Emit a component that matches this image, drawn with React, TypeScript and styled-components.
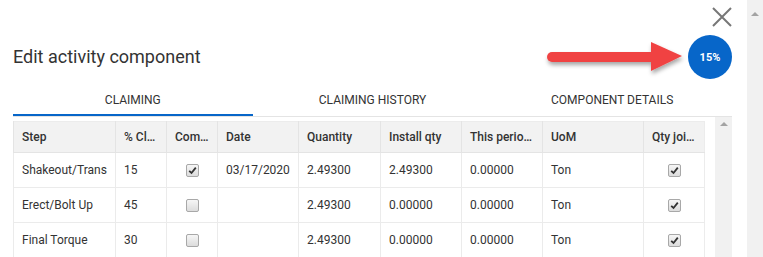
import React, { FC } from 'react'
import styled, { createGlobalStyle } from 'styled-components'

type Row = {
  step: string
  pct: string
  complete: boolean
  date: string
  quantity: string
  installQty: string
  thisPeriod: string
  uom: string
  qtyJoined: boolean
}

const rows: Row[] = [
  { step: 'Shakeout/Trans', pct: '15', complete: true, date: '03/17/2020', quantity: '2.49300', installQty: '2.49300', thisPeriod: '0.00000', uom: 'Ton', qtyJoined: true },
  { step: 'Erect/Bolt Up', pct: '45', complete: false, date: '', quantity: '2.49300', installQty: '0.00000', thisPeriod: '0.00000', uom: 'Ton', qtyJoined: true },
  { step: 'Final Torque', pct: '30', complete: false, date: '', quantity: '2.49300', installQty: '0.00000', thisPeriod: '0.00000', uom: 'Ton', qtyJoined: true },
]

const columns = [
  { label: 'Step', width: 102 },
  { label: '% Cl…', width: 51 },
  { label: 'Com…', width: 51 },
  { label: 'Date', width: 81 },
  { label: 'Quantity', width: 82 },
  { label: 'Install qty', width: 81 },
  { label: 'This perio…', width: 81 },
  { label: 'UoM', width: 101 },
  { label: 'Qty joi…', width: 61 },
]

const tabs = ['Claiming', 'Claiming history', 'Component details']

const CheckBox: FC<{ checked: boolean }> = ({ checked }) => (
  <Box>
    {checked && (
      <svg width='9' height='9' viewBox='0 0 9 9'>
        <path d='M1.2 4.8 L3.5 7 L7.8 1.6' fill='none' stroke='#333' strokeWidth='1.8' />
      </svg>
    )}
  </Box>
)

const App: FC = () => {
  return (
    <>
      <GlobalStyle />
      <Page>
        <Dialog>
          <Header>
            <Title>Edit activity component</Title>
            <HeaderSide>
              <CloseButton aria-label='Close'>
                <svg width='20' height='20' viewBox='0 0 20 20'>
                  <path d='M1 1 L19 19 M19 1 L1 19' stroke='#777' strokeWidth='2' />
                </svg>
              </CloseButton>
              <ProgressBadge>15%</ProgressBadge>
            </HeaderSide>
          </Header>

          <TabBar>
            {tabs.map((t, i) => (
              <Tab key={t} active={i === 0}>{t}</Tab>
            ))}
          </TabBar>

          <Body>
            <TableWrap>
              <Table>
                <colgroup>
                  {columns.map(c => <col key={c.label} style={{ width: c.width }} />)}
                </colgroup>
                <thead>
                  <tr>
                    {columns.map(c => <Th key={c.label}>{c.label}</Th>)}
                  </tr>
                </thead>
                <tbody>
                  {rows.map(r => (
                    <tr key={r.step}>
                      <Td>{r.step}</Td>
                      <Td>{r.pct}</Td>
                      <Td center><CheckBox checked={r.complete} /></Td>
                      <Td>{r.date}</Td>
                      <Td>{r.quantity}</Td>
                      <Td>{r.installQty}</Td>
                      <Td>{r.thisPeriod}</Td>
                      <Td>{r.uom}</Td>
                      <Td center><CheckBox checked={r.qtyJoined} /></Td>
                    </tr>
                  ))}
                </tbody>
              </Table>
            </TableWrap>
            <ScrollTrack inner>
              <ScrollArrow />
            </ScrollTrack>
          </Body>

          <Callout width='142' height='44' viewBox='0 0 142 44'>
            <defs>
              <filter id='shadow' x='-10%' y='-30%' width='120%' height='180%'>
                <feDropShadow dx='1' dy='3' stdDeviation='2' floodColor='#000' floodOpacity='0.35' />
              </filter>
            </defs>
            <g filter='url(#shadow)'>
              <rect x='2' y='14' width='112' height='10' rx='5' fill='#f04343' />
              <path d='M106 4 L137 18 L106 33 Z' fill='#f04343' />
            </g>
          </Callout>
        </Dialog>
        <ScrollTrack>
          <ScrollArrow />
        </ScrollTrack>
      </Page>
    </>
  )
}

const GlobalStyle = createGlobalStyle`
  html, body {
    margin: 0;
    padding: 0;
    background: #fff;
    font-family: Roboto, 'Liberation Sans', sans-serif;
    color: #333;
  }
`

const Page = styled.div`
  display: flex;
  height: 257px;
  overflow: hidden;
`

const Dialog = styled.div`
  position: relative;
  flex: 1;
  display: flex;
  flex-direction: column;
  padding: 0 15px 0 13px;
  min-width: 0;
`

const Header = styled.div`
  display: flex;
  justify-content: space-between;
  align-items: flex-start;
  height: 85px;
`

const Title = styled.h2`
  margin: 45px 0 0;
  font-size: 18px;
  line-height: 24px;
  font-weight: 400;
  color: #333;
`

const HeaderSide = styled.div`
  display: flex;
  flex-direction: column;
  align-items: flex-end;
  gap: 8px;
  padding-top: 7px;
`

const CloseButton = styled.button`
  width: 20px;
  height: 20px;
  padding: 0;
  border: 0;
  background: none;
  display: block;

  svg {
    display: block;
  }
`

const ProgressBadge = styled.div`
  width: 44px;
  height: 44px;
  border-radius: 50%;
  background: #0766c9;
  color: #fff;
  font-size: 11px;
  font-weight: 700;
  display: flex;
  align-items: center;
  justify-content: center;
`

const TabBar = styled.div`
  display: grid;
  grid-template-columns: repeat(3, 1fr);
  border-bottom: 1px solid #e4e4e4;
`

const Tab = styled.div<{ active?: boolean }>`
  height: 29px;
  display: flex;
  align-items: center;
  justify-content: center;
  font-size: 12px;
  line-height: 14px;
  text-transform: uppercase;
  color: #333;
  border-bottom: 2px solid ${({ active }) => (active ? '#0766c9' : 'transparent')};
`

const Body = styled.div`
  display: flex;
  flex: 1;
  min-height: 0;
`

const TableWrap = styled.div`
  flex: 1;
  padding-top: 4px;
`

const Table = styled.table`
  width: 691px;
  table-layout: fixed;
  border-collapse: collapse;
  font-size: 12px;
  color: #333;
  border: 1px solid #ececec;
`

const Th = styled.th`
  height: 30px;
  padding: 0 8px;
  background: #f2f2f2;
  text-align: left;
  font-weight: 500;
  white-space: nowrap;
  overflow: hidden;
  border-left: 1px solid #e4e4e4;
  border-bottom: 1px solid #e4e4e4;
`

const Td = styled.td<{ center?: boolean }>`
  height: 34px;
  padding: 0 8px;
  white-space: nowrap;
  overflow: hidden;
  text-align: ${({ center }) => (center ? 'center' : 'left')};
  border-left: 1px solid #ebebeb;
  border-bottom: 1px solid #ebebeb;
`

const Box = styled.span`
  display: inline-flex;
  align-items: center;
  justify-content: center;
  width: 11px;
  height: 11px;
  border: 1px solid #a8a8a8;
  border-radius: 2px;
  background: linear-gradient(#f6f6f6, #dcdcdc);
  vertical-align: middle;
`

const ScrollTrack = styled.div<{ inner?: boolean }>`
  width: ${({ inner }) => (inner ? '17px' : '16px')};
  background: #f1f1f1;
  display: flex;
  justify-content: center;
  padding-top: ${({ inner }) => (inner ? '5px' : '12px')};
  box-sizing: border-box;
`

const ScrollArrow = styled.div`
  width: 0;
  height: 0;
  border-left: 4px solid transparent;
  border-right: 4px solid transparent;
  border-bottom: 4px solid #a3a3a3;
`

const Callout = styled.svg`
  position: absolute;
  left: 545px;
  top: 38px;
  overflow: visible;
`

export default App
